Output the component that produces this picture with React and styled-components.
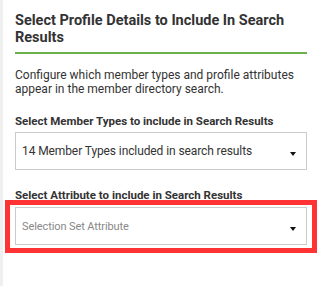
import React from "react";
import styled, { createGlobalStyle } from "styled-components";

const Global = createGlobalStyle`
  html, body { margin: 0; padding: 0; background: #fff; }
  body { font-family: Roboto, "Liberation Sans", Arial, sans-serif; color: #333; }
`;

const Panel = styled.div`
  box-sizing: border-box;
  width: 321px;
  height: 286px;
  border-left: 3px solid #efefef;
  padding: 12px 14px 0 12px;
`;

const Heading = styled.h2`
  margin: 0;
  font-size: 14.5px;
  line-height: 17px;
  font-weight: 700;
  color: #333;
  padding-bottom: 6px;
  border-bottom: 2px solid #6ab04c;
`;

const Intro = styled.p`
  margin: 14px 0 0;
  font-size: 12px;
  line-height: 14px;
  color: #333;
`;

const Field = styled.div`
  margin-top: ${(p) => p.$gap}px;
`;

const Label = styled.div`
  font-size: 11.5px;
  line-height: 13px;
  font-weight: 700;
  color: #333;
  margin-bottom: ${(p) => p.$mb}px;
`;

const Highlight = styled.div`
  margin: 0 -10px;
  border: 5px solid #ff3333;
  padding: 2px 5px 3px;
`;

const Select = styled.div`
  box-sizing: border-box;
  height: 38px;
  border: 1px solid #cccccc;
  display: flex;
  align-items: center;
  justify-content: space-between;
  padding: 0 10px 0 6px;
  font-size: ${(p) => (p.$placeholder ? 11 : 12)}px;
  line-height: 13px;
  letter-spacing: -0.1px;
  color: ${(p) => (p.$placeholder ? "#888" : "#333")};
`;

const Arrow = styled.span`
  width: 0;
  height: 0;
  border-left: 3px solid transparent;
  border-right: 3px solid transparent;
  border-top: 4px solid #111;
  margin-top: 6px;
`;

export default function App() {
  return (
    <>
      <Global />
      <Panel>
        <Heading>Select Profile Details to Include In Search Results</Heading>
        <Intro>
          Configure which member types and profile attributes appear in the
          member directory search.
        </Intro>
        <Field $gap={19}>
          <Label $mb={4}>Select Member Types to include in Search Results</Label>
          <Select>
            <span>14 Member Types included in search results</span>
            <Arrow />
          </Select>
        </Field>
        <Field $gap={19}>
          <Label $mb={-2}>Select Attribute to include in Search Results</Label>
          <Highlight>
            <Select $placeholder>
              <span>Selection Set Attribute</span>
              <Arrow />
            </Select>
          </Highlight>
        </Field>
      </Panel>
    </>
  );
}
